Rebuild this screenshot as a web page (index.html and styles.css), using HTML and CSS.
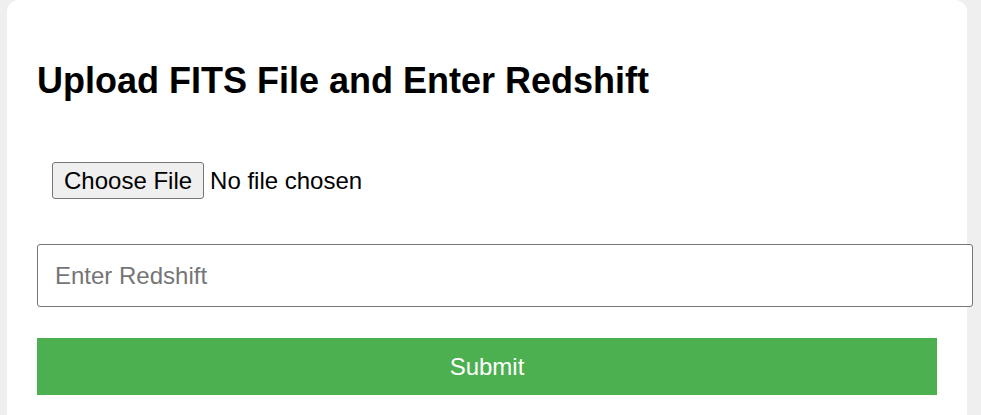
FILE: index.html
```html
<!DOCTYPE html>
<html lang="en">
<head>
<meta charset="utf-8">
<title>Upload FITS File</title>
<link rel="stylesheet" href="styles.css">
</head>
<body>
<div class="card">
  <h2 class="title">Upload FITS File and Enter Redshift</h2>
  <form class="form">
    <input class="file-input" type="file" accept=".fits">
    <input class="text-input" type="text" placeholder="Enter Redshift">
    <button class="submit" type="submit">Submit</button>
  </form>
</div>
</body>
</html>
```

FILE: styles.css
```css
html, body {
  margin: 0;
  padding: 0;
  background: #efefef;
  font-family: "Liberation Sans", Arial, sans-serif;
}

.card {
  width: 960px;
  box-sizing: border-box;
  margin-left: 7px;
  padding: 60px 30px 40px;
  background: #ffffff;
  border-radius: 12px;
}

.title {
  margin: 0 0 46px;
  font-size: 36px;
  font-weight: bold;
  line-height: 41px;
  color: #000;
}

.form {
  display: flex;
  flex-direction: column;
  align-items: flex-start;
}

.file-input {
  display: block;
  padding: 15px;
  font-family: "Liberation Sans", Arial, sans-serif;
  font-size: 24px;
  color: #000;
}

.file-input::file-selector-button {
  font: inherit;
  font-size: 24px;
  padding: 3px 11px;
  margin-right: 6px;
  border: 1px solid #767676;
  border-radius: 3px;
  background: #efefef;
  color: #000;
  height: 37px;
  line-height: 29px;
}

.text-input {
  display: block;
  box-sizing: border-box;
  width: 936px;
  height: 63px;
  margin-top: 30px;
  padding: 0 17px;
  border: 1px solid #767676;
  border-radius: 3px;
  font-family: "Liberation Sans", Arial, sans-serif;
  font-size: 24px;
  color: #000;
  outline: none;
}

.text-input::placeholder {
  color: #757575;
}

.submit {
  display: block;
  box-sizing: border-box;
  width: 900px;
  height: 57px;
  margin-top: 31px;
  border: none;
  background: #4caf50;
  color: #fff;
  font-family: "Liberation Sans", Arial, sans-serif;
  font-size: 24px;
  cursor: pointer;
}
```
